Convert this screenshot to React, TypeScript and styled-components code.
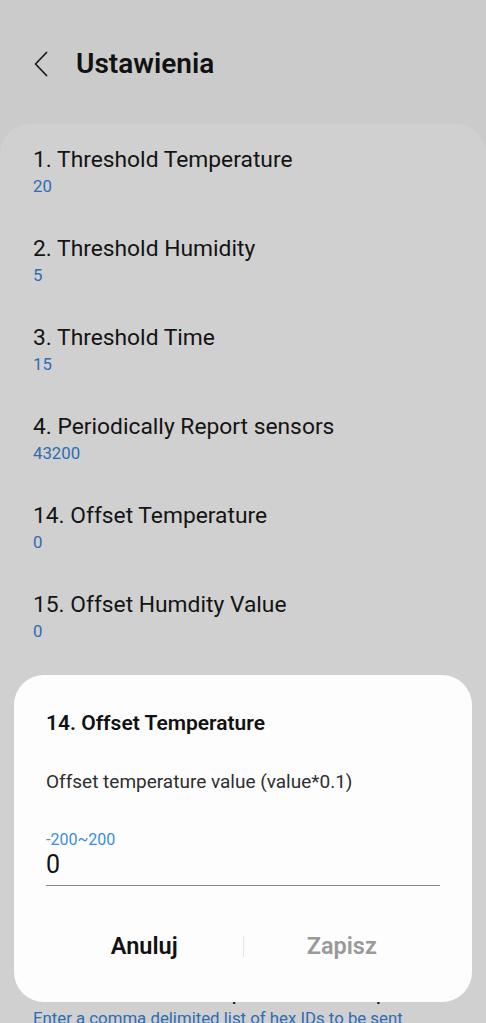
import React from "react";
import styled, {createGlobalStyle} from "styled-components";

const GlobalStyle = createGlobalStyle`
	html, body {
		margin: 0;
		padding: 0;
		background: #cbcbcb;
		font-family: Roboto, "Noto Sans", "Liberation Sans", sans-serif;
	}
	* {
		box-sizing: border-box;
	}
`;

type Param = {
	title: string;
	value: string;
};

const params: Param[] = [
	{title: "1. Threshold Temperature", value: "20"},
	{title: "2. Threshold Humidity", value: "5"},
	{title: "3. Threshold Time", value: "15"},
	{title: "4. Periodically Report sensors", value: "43200"},
	{title: "14. Offset Temperature", value: "0"},
	{title: "15. Offset Humdity Value", value: "0"},
	{
		title: "5. Association Group 1: Lifeline",
		value: "Enter a comma delimited list of hex IDs to be sent notifications about the device status, the battery level and a device reset. Example: 0A, 1B, 2C, 3D, 4E, 5F, 6A, 7B, 8C, 9D and so on",
	},
	{
		title: "6. Association Group 2: Zon1 Temp",
		value: "Enter a comma delimited list of hex IDs to be sent temperature reports from the first zone. Example: 0A, 1B, 2C. Leave the field empty to disable this association group entirely, please",
	},
	{
		title: "7. Association Group 3: Zon1 Temp",
		value: "Enter a comma delimited list of hex IDs to be sent humidity reports from the first zone.",
	},
];

const App = () => {
	return (
		<Page>
			<GlobalStyle />
			<Header>
				<BackButton aria-label="back">
					<svg width="14" height="26" viewBox="0 0 14 26" fill="none">
						<path d="M12.5 1.5L1.5 13L12.5 24.5" stroke="#1c1c1c" strokeWidth="1.8" strokeLinecap="round" strokeLinejoin="round" />
					</svg>
				</BackButton>
				<Title>Ustawienia</Title>
			</Header>

			<Card>
				{params.map(p => (
					<Item key={p.title}>
						<ItemTitle>{p.title}</ItemTitle>
						<ItemValue>{p.value}</ItemValue>
					</Item>
				))}
			</Card>

			<Overlay>
				<Dialog>
					<DialogTitle>14. Offset Temperature</DialogTitle>
					<DialogText>Offset temperature value (value*0.1)</DialogText>
					<Hint>-200~200</Hint>
					<Input>0</Input>
					<Actions>
						<ActionButton>Anuluj</ActionButton>
						<Divider />
						<ActionButton disabled>Zapisz</ActionButton>
					</Actions>
				</Dialog>
			</Overlay>
		</Page>
	);
};

export default App;

const Page = styled.div`
	width: 486px;
	height: 1023px;
	overflow: hidden;
	position: relative;
	background: #cbcbcb;
`;

const Header = styled.div`
	display: flex;
	align-items: center;
	height: 32px;
	margin-top: 48px;
	padding-left: 34px;
`;

const BackButton = styled.div`
	display: flex;
	align-items: center;
	width: 14px;
	height: 26px;
`;

const Title = styled.h1`
	margin: 0 0 0 28px;
	font-size: 28px;
	line-height: 32px;
	font-weight: 600;
	color: #111;
`;

const Card = styled.div`
	margin-top: 44px;
	background: #d0d0d0;
	border-radius: 30px 30px 0 0;
	padding: 3px 33px 0;
`;

const Item = styled.div`
	display: flex;
	flex-direction: column;
	gap: 3px;
	padding: 20px 0;
`;

const ItemTitle = styled.div`
	font-size: 22.8px;
	line-height: 26px;
	color: #141414;
`;

const ItemValue = styled.div`
	font-size: 16.8px;
	line-height: 20px;
	color: #2e6cb2;
`;

const Overlay = styled.div`
	position: absolute;
	inset: 0;
	display: flex;
	align-items: flex-end;
	padding: 0 14px 21px;
`;

const Dialog = styled.div`
	width: 100%;
	background: #fdfdfd;
	border-radius: 30px;
	padding: 36px 32px 42px;
	display: flex;
	flex-direction: column;
`;

const DialogTitle = styled.div`
	font-size: 21px;
	line-height: 24px;
	font-weight: 600;
	color: #111;
`;

const DialogText = styled.div`
	margin-top: 36px;
	font-size: 19px;
	line-height: 22px;
	color: #2e2e2e;
`;

const Hint = styled.div`
	margin-top: 38px;
	font-size: 16px;
	line-height: 18px;
	color: #3a8de0;
`;

const Input = styled.div`
	margin-top: 2px;
	font-size: 25px;
	line-height: 28px;
	color: #111;
	padding-bottom: 6px;
	border-bottom: 1px solid #8a8a8a;
`;

const Actions = styled.div`
	margin-top: 46px;
	display: flex;
	align-items: center;
	height: 28px;
`;

const ActionButton = styled.div<{disabled?: boolean}>`
	flex: 1;
	text-align: center;
	font-size: 23.5px;
	line-height: 28px;
	font-weight: 600;
	color: ${p => (p.disabled ? "#9a9a9a" : "#111")};
`;

const Divider = styled.div`
	width: 1px;
	height: 21px;
	background: #e4e4e4;
`;
